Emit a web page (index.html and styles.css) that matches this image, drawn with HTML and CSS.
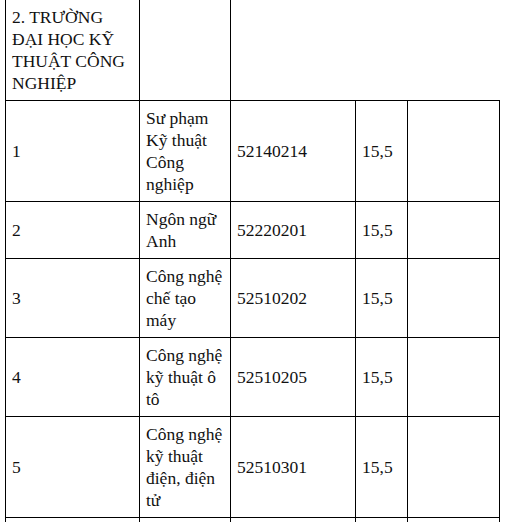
FILE: index.html
```html
<!DOCTYPE html>
<html lang="vi">
<head>
<meta charset="utf-8">
<title>Trường Đại học Kỹ thuật Công nghiệp</title>
<link rel="stylesheet" href="styles.css">
</head>
<body>
<table class="score-table">
  <colgroup>
    <col class="c-stt">
    <col class="c-name">
    <col class="c-code">
    <col class="c-score">
    <col class="c-note">
  </colgroup>
  <tbody>
    <tr class="school-row">
      <td>2. TRƯỜNG ĐẠI HỌC KỸ THUẬT CÔNG NGHIỆP</td>
      <td></td>
      <td colspan="3" class="open-right"></td>
    </tr>
    <tr>
      <td>1</td>
      <td>Sư phạm Kỹ thuật Công nghiệp</td>
      <td>52140214</td>
      <td>15,5</td>
      <td></td>
    </tr>
    <tr>
      <td>2</td>
      <td>Ngôn ngữ Anh</td>
      <td>52220201</td>
      <td>15,5</td>
      <td></td>
    </tr>
    <tr>
      <td>3</td>
      <td>Công nghệ chế tạo máy</td>
      <td>52510202</td>
      <td>15,5</td>
      <td></td>
    </tr>
    <tr>
      <td>4</td>
      <td>Công nghệ kỹ thuật ô tô</td>
      <td>52510205</td>
      <td>15,5</td>
      <td></td>
    </tr>
    <tr>
      <td>5</td>
      <td>Công nghệ kỹ thuật điện, điện tử</td>
      <td>52510301</td>
      <td>15,5</td>
      <td></td>
    </tr>
    <tr class="tail-row">
      <td></td>
      <td></td>
      <td></td>
      <td></td>
      <td></td>
    </tr>
  </tbody>
</table>
</body>
</html>
```

FILE: styles.css
```css
html, body {
  margin: 0;
  padding: 0;
  height: 522px;
  overflow: hidden;
  background: #fff;
}

.score-table {
  margin: -1px 0 0 5px;
  width: 495px;
  table-layout: fixed;
  border-collapse: collapse;
  font-family: "Liberation Serif", "Times New Roman", serif;
  font-size: 17.5px;
  line-height: 22px;
  color: #111;
}

.c-stt { width: 134px; }
.c-name { width: 91px; }
.c-code { width: 125px; }
.c-score { width: 52px; }
.c-note { width: 92px; }

.score-table td {
  border: 1px solid #000;
  padding: 6px 6px;
  vertical-align: middle;
  text-align: left;
}

.score-table .open-right {
  border-right: none;
  border-top: none;
}

.score-table .tail-row td {
  padding: 0;
  height: 8px;
}
```
